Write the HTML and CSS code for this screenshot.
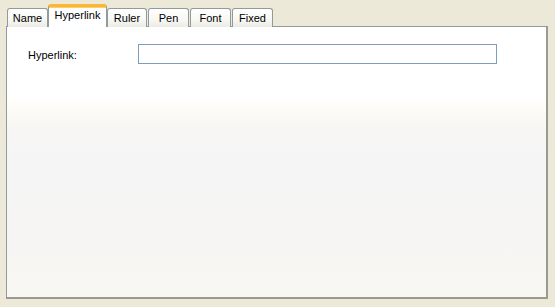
FILE: index.html
```html
<!DOCTYPE html>
<html>
<head>
    <title>Properties</title>
    <link rel="stylesheet" href="styles.css">
</head>
<body>
    <div class="dialog">
        <div class="tabs">
            <div class="tab tab-name">Name</div>
            <div class="tab tab-hyperlink selected">Hyperlink</div>
            <div class="tab tab-ruler">Ruler</div>
            <div class="tab tab-pen">Pen</div>
            <div class="tab tab-font">Font</div>
            <div class="tab tab-fixed">Fixed</div>
        </div>

        <div class="panel">
            <div class="form-row">
                <label for="hyperlink">Hyperlink:</label>
                <input type="text" id="hyperlink">
            </div>
        </div>
    </div>
</body>
</html>
```

FILE: styles.css
```css
* {
    margin: 0;
    padding: 0;
    box-sizing: border-box;
}

html, body {
    height: 100%;
}

body {
    font-family: "Liberation Sans", Arial, sans-serif;
    font-size: 11px;
    color: #000;
    background: #ECE9D8;
    padding: 4px 7px 8px 6px;
}

.dialog {
    display: flex;
    flex-direction: column;
    height: 100%;
}

.tabs {
    display: flex;
    align-items: flex-end;
    height: 23px;
    padding-left: 1px;
    position: relative;
    z-index: 1;
    margin-bottom: -1px;
}

.tab {
    height: 19px;
    border: 1px solid #919B9C;
    border-bottom: none;
    border-radius: 3px 3px 0 0;
    background: linear-gradient(#FFFFFF, #F7F7F4 60%, #ECEBE5);
    text-align: center;
    line-height: 18px;
    margin-right: 1px;
}

.tab-name { width: 41px; margin-right: 0; }
.tab-hyperlink { width: 59px; }
.tab-ruler { width: 40px; }
.tab-pen { width: 41px; }
.tab-font { width: 41px; }
.tab-fixed { width: 41px; }

.tab.selected {
    height: 23px;
    background: #FFFFFF;
    border-top: 3px solid #F8B73A;
    border-color: #F8B73A #919B9C #919B9C;
    border-bottom: none;
    line-height: 17px;
    margin-right: 0;
    box-shadow: inset 0 1px 0 #FFCF5C;
}

.panel {
    flex: 1;
    border: 1px solid #919B9C;
    border-right: 2px solid #9A9A90;
    border-bottom: 2px solid #9A9A90;
    background: linear-gradient(#FFFFFF 0%, #FFFFFF 25%, #FDFBF6 31%, #F8F6F4 38%, #F5F5F6 50%, #F6F5F3 80%, #F8F7F2 100%);
    padding: 17px 49px 0 21px;
}

.form-row {
    display: flex;
    align-items: center;
}

.form-row label {
    width: 110px;
    padding-top: 1px;
}

.form-row input {
    flex: 1;
    height: 20px;
    border: 1px solid #7F9DB9;
    background: #FFFFFF;
    font-family: inherit;
    font-size: 11px;
}
```
